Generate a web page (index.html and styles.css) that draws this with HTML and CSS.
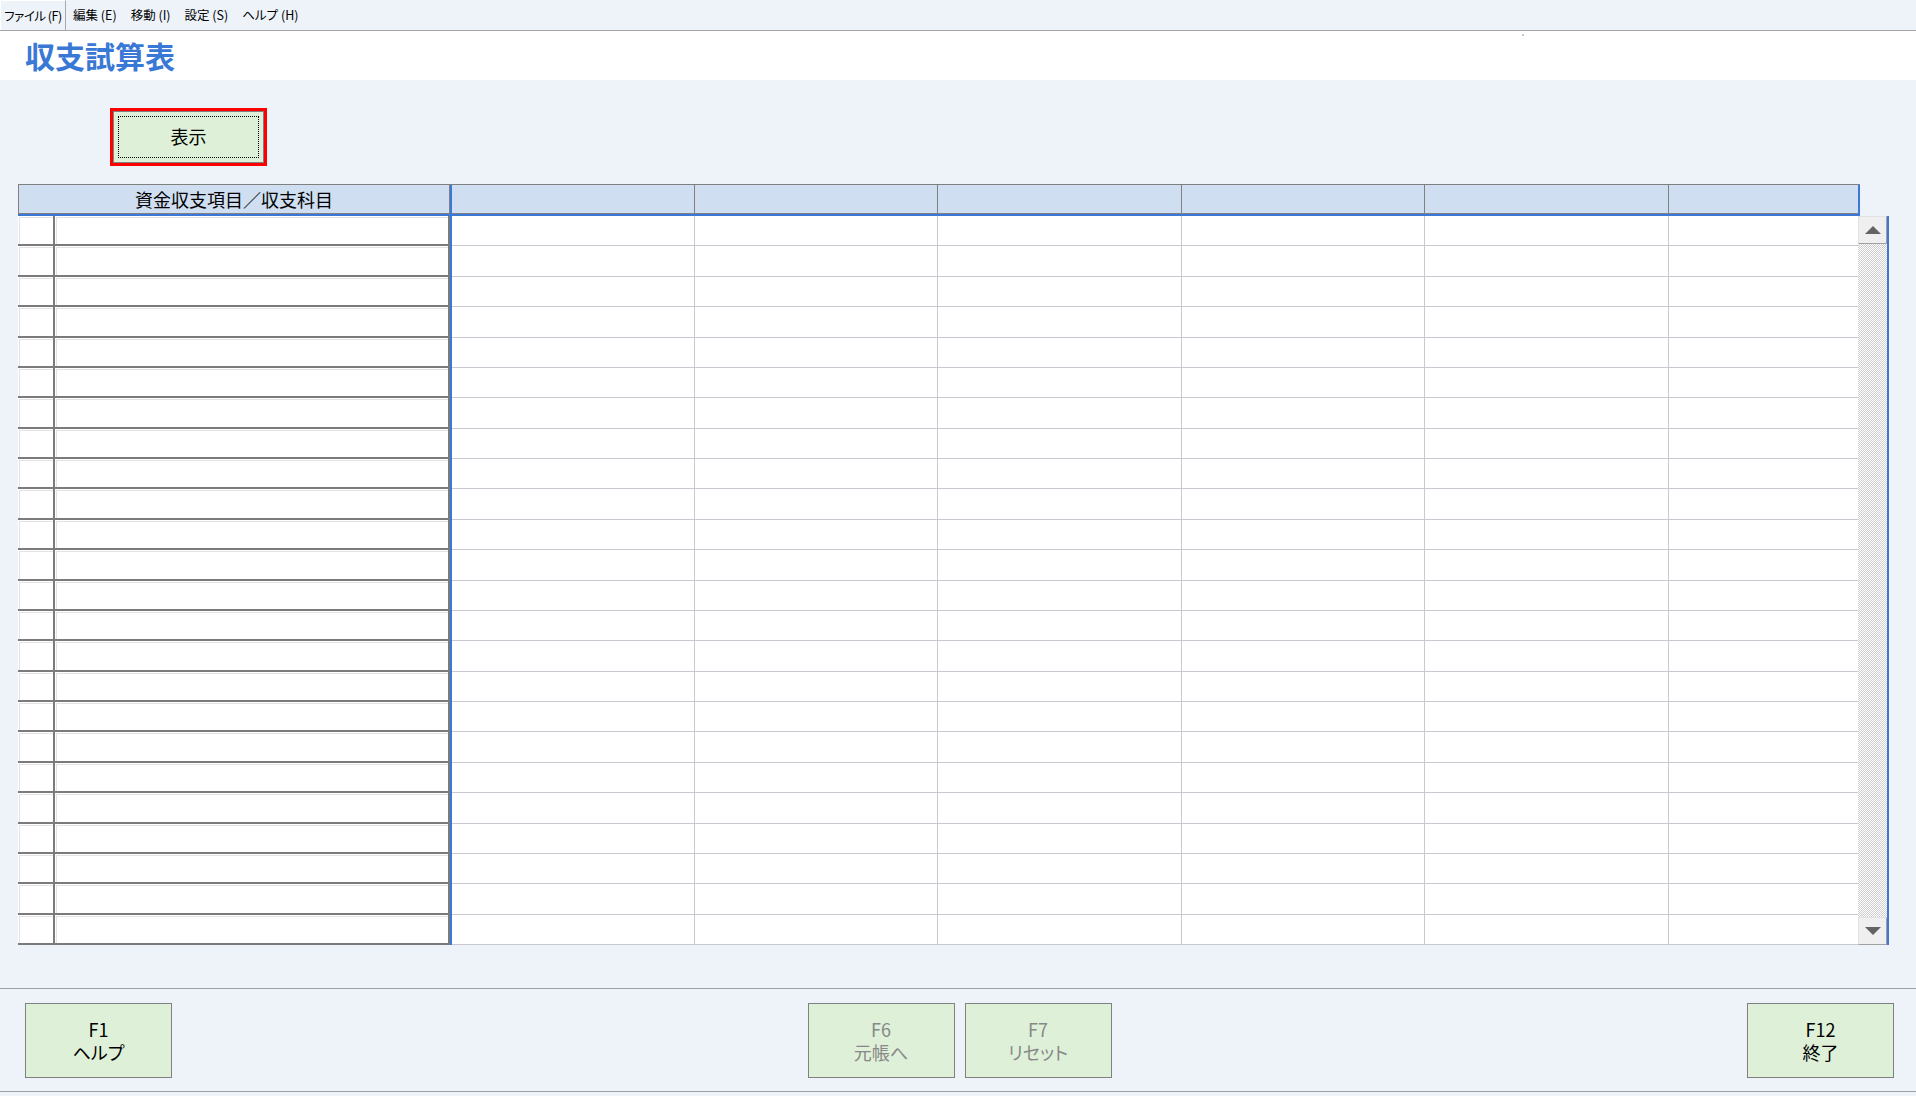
FILE: index.html
```html
<!DOCTYPE html>
<html lang="ja">
<head>
<meta charset="utf-8">
<title>収支試算表</title>
<link rel="stylesheet" href="styles.css">
</head>
<body>
<div class="menubar">
  <span class="menu-item active">ファイル (F)</span>
  <span class="menu-item">編集 (E)</span>
  <span class="menu-item">移動 (I)</span>
  <span class="menu-item">設定 (S)</span>
  <span class="menu-item">ヘルプ (H)</span>
</div>
<div class="titlebar">
  <h1 class="title">収支試算表</h1>
  <span class="speck"></span>
</div>
<div class="main">
  <div class="toolbar">
    <div class="focus-ring">
      <button class="btn-show" type="button"><span class="focus-dots">表示</span></button>
    </div>
  </div>
  <div class="grid">
    <div class="grid-head">
      <div class="hd-name">資金収支項目／収支科目</div>
      <div class="split"></div>
      <div class="hd-col c1"></div>
      <div class="hd-col c2"></div>
      <div class="hd-col c3"></div>
      <div class="hd-col c4"></div>
      <div class="hd-col c5"></div>
      <div class="hd-col c6"></div>
      <div class="hd-edge"></div>
    </div>
    <div class="grid-body">
      <div class="frozen" id="frozen"></div>
      <div class="split"></div>
      <div class="cells" id="cells"></div>
      <div class="vscroll">
        <div class="sb-btn"><span class="arrow-up"></span></div>
        <div class="sb-track"></div>
        <div class="sb-btn"><span class="arrow-down"></span></div>
      </div>
    </div>
  </div>
</div>
<div class="footer">
  <div class="fgroup left">
    <div class="fkey"><span>F1</span><span>ヘルプ</span></div>
  </div>
  <div class="fgroup center">
    <div class="fkey disabled"><span>F6</span><span>元帳へ</span></div>
    <div class="fkey disabled"><span>F7</span><span>リセット</span></div>
  </div>
  <div class="fgroup right">
    <div class="fkey"><span>F12</span><span>終了</span></div>
  </div>
</div>
<script>
  (function () {
    var frozen = document.getElementById('frozen');
    var cells = document.getElementById('cells');
    for (var i = 0; i < 24; i++) {
      var fr = document.createElement('div');
      fr.className = 'frow';
      fr.innerHTML = '<div class="fcell rh"></div><div class="fcell nm"></div>';
      frozen.appendChild(fr);
      var dr = document.createElement('div');
      dr.className = 'drow';
      dr.innerHTML = '<div class="dcell c1"></div><div class="dcell c2"></div><div class="dcell c3"></div><div class="dcell c4"></div><div class="dcell c5"></div><div class="dcell c6"></div>';
      cells.appendChild(dr);
    }
  })();
</script>
</body>
</html>
```

FILE: styles.css
```css
* { box-sizing: border-box; }

body {
  margin: 0;
  width: 1916px;
  height: 1096px;
  overflow: hidden;
  background: #eef3fa;
  font-family: "Noto Sans CJK JP", "Noto Sans", sans-serif;
  color: #000;
}

/* menu bar */
.menubar {
  height: 31px;
  border-bottom: 1px solid #a6a6a6;
  display: flex;
  font-size: 12.5px;
  font-feature-settings: "palt";
  background: #eef3fa;
}
.menu-item {
  display: flex;
  align-items: center;
  padding: 0 7px 1px;
  white-space: nowrap;
}
.menu-item.active {
  width: 66px;
  padding: 0 0 1px;
  justify-content: center;
  letter-spacing: -0.5px;
  border-top: 1px solid #ffffff;
  border-left: 1px solid #ffffff;
  border-right: 1px solid #a8a8a8;
}

/* title */
.titlebar {
  position: relative;
  background: #ffffff;
  height: 49px;
  padding: 6px 0 0 25px;
}
.title {
  margin: 0;
  font-size: 30px;
  line-height: 36px;
  font-weight: 700;
  color: #3a78d6;
}
.speck {
  position: absolute;
  left: 1522px;
  top: 3px;
  width: 2px;
  height: 2px;
  background: #c8c8c8;
}

/* toolbar */
.main {
  padding-top: 28px;
}
.toolbar {
  padding-left: 110px;
  height: 58px;
  margin-bottom: 18px;
}
.focus-ring {
  width: 157px;
  height: 58px;
  border: 3px solid #ff0000;
}
.btn-show {
  display: block;
  width: 100%;
  height: 100%;
  margin: 0;
  padding: 4px;
  border: 1px solid #808080;
  background: #def0d8;
  font: inherit;
  color: #000;
}
.focus-dots {
  display: flex;
  height: 100%;
  align-items: center;
  justify-content: center;
  border: 1px dotted #000;
  font-size: 18px;
  padding-bottom: 2px;
}

/* grid */
.grid {
  margin-left: 18px;
  width: 1871px;
}
.grid-head {
  display: flex;
  width: 1842px;
  height: 32px;
  border-top: 1px solid #808080;
  border-bottom: 2px solid #3c78d8;
  background: #cfdef0;
}
.hd-name {
  width: 432px;
  border-left: 1px solid #808080;
  border-right: 1px solid #808080;
  border-bottom: 1px solid #808080;
  display: flex;
  align-items: center;
  justify-content: center;
  font-size: 18px;
}
.split {
  width: 2px;
  flex: none;
  background: #3c78d8;
}
.hd-col {
  border-right: 1px solid #808080;
  border-bottom: 1px solid #808080;
}
.hd-col.c6 { border-right: 0; }
.hd-edge {
  width: 2px;
  background: #3c78d8;
}
.c1, .c2, .c4 { width: 243px; flex: none; }
.c3, .c5 { width: 244px; flex: none; }
.c6 { width: 189px; flex: none; }

.grid-body {
  display: flex;
  height: 729px;
}
.frozen {
  width: 432px;
  display: flex;
  flex-direction: column;
}
.frow {
  flex: 1;
  display: flex;
}
.fcell {
  background: #ffffff;
  border-right: 2px solid #7b7b7b;
  border-bottom: 2px solid #7b7b7b;
  box-shadow: inset 1px 1px 0 #ffffff, inset 2px 2px 0 #e3e3e3;
}
.fcell.rh { width: 37px; }
.fcell.nm { flex: 1; }

.cells {
  width: 1406px;
  display: flex;
  flex-direction: column;
  background: #ffffff;
}
.drow {
  flex: 1;
  display: flex;
}
.dcell {
  border-right: 1px solid #c8c8d0;
  border-bottom: 1px solid #c8c8d0;
}
.dcell.c6 { border-right: 0; }

/* scrollbar */
.vscroll {
  width: 31px;
  display: flex;
  flex-direction: column;
  border-right: 2px solid #3c78d8;
}
.sb-btn {
  height: 28px;
  flex: none;
  display: flex;
  align-items: center;
  justify-content: center;
  background: #efefef;
  border: 1px solid;
  border-color: #e2e2e2 #a0a0a0 #a0a0a0 #e2e2e2;
}
.sb-track {
  flex: 1;
  background: repeating-conic-gradient(#cdcdcd 0 25%, #ffffff 0 50%) 0 0 / 2px 2px;
}
.arrow-up {
  width: 0;
  height: 0;
  border-left: 8px solid transparent;
  border-right: 8px solid transparent;
  border-bottom: 8px solid #636363;
}
.arrow-down {
  width: 0;
  height: 0;
  border-left: 8px solid transparent;
  border-right: 8px solid transparent;
  border-top: 8px solid #636363;
}

/* footer */
.footer {
  margin-top: 43px;
  border-top: 1px solid #a0a0a0;
  border-bottom: 1px solid #a0a0a0;
  padding: 14px 22px 13px 25px;
  display: grid;
  grid-template-columns: 1fr auto 1fr;
}
.fgroup {
  display: flex;
  gap: 10px;
}
.fgroup.right { justify-content: flex-end; }
.fkey {
  width: 147px;
  height: 75px;
  border: 1px solid #808080;
  background: #def0d8;
  display: flex;
  flex-direction: column;
  align-items: center;
  justify-content: center;
  font-size: 18px;
  line-height: 23px;
  font-feature-settings: "palt";
}
.fkey.disabled { color: #888888; }
```
